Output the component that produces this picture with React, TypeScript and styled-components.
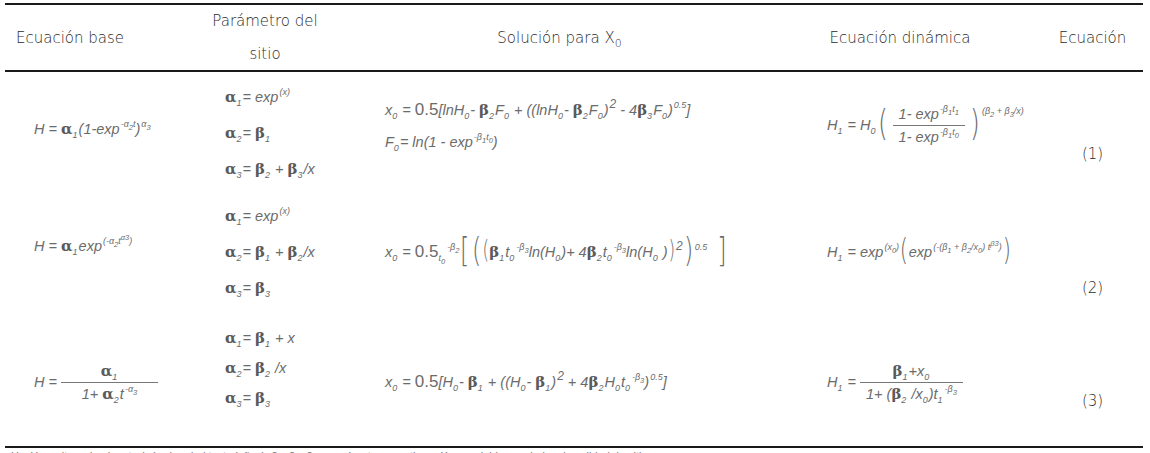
import React from 'react';
import styled, { createGlobalStyle } from 'styled-components';

const GlobalStyle = createGlobalStyle`
    html, body {
        margin: 0;
        padding: 0;
        background: #fff;
    }
    body {
        font-family: "DejaVu Sans", sans-serif;
        color: #333;
        overflow: hidden;
    }
`;

const COLS = '195px 130px 450px 240px 123px';

const Table = styled.div`
    width: 1138px;
    margin: 3px 0 0 5px;
`;

const HeadRow = styled.div`
    display: grid;
    grid-template-columns: ${COLS};
    height: 65px;
    border-top: 2px solid #1a1a1a;
    border-bottom: 2px solid #1a1a1a;
`;

const HeadCell = styled.div<{ $left?: boolean; $pad?: number }>`
    display: flex;
    align-items: center;
    justify-content: ${p => (p.$left ? 'flex-start' : 'center')};
    text-align: center;
    padding-left: ${p => p.$pad ?? 0}px;
    font-family: "DejaVu Sans", sans-serif;
    font-stretch: condensed;
    font-weight: 200;
    font-size: 15px;
    line-height: 33px;
    color: #2b2b2b;
`;

const Body = styled.div`
    border-bottom: 2px solid #1a1a1a;
`;

const Row = styled.div<{ $h: number }>`
    display: grid;
    grid-template-columns: ${COLS};
    height: ${p => p.$h}px;
`;

const Cell = styled.div<{ $pad?: number; $shift?: number }>`
    display: flex;
    flex-direction: column;
    justify-content: center;
    align-items: flex-start;
    padding-left: ${p => p.$pad ?? 0}px;
    padding-top: ${p => (p.$shift && p.$shift > 0 ? p.$shift : 0)}px;
    padding-bottom: ${p => (p.$shift && p.$shift < 0 ? -p.$shift : 0)}px;
`;

const EqCell = styled.div<{ $shift: number }>`
    display: flex;
    align-items: center;
    justify-content: center;
    padding-left: 22px;
    padding-top: ${p => p.$shift}px;
    font-family: "DejaVu Sans", sans-serif;
    font-stretch: condensed;
    font-weight: 200;
    font-size: 15px;
    color: #2b2b2b;
`;

const Formula = styled.div<{ $lh?: number }>`
    font-family: "Liberation Sans", sans-serif;
    font-style: italic;
    font-size: 14.5px;
    color: #6b6b6b;
    white-space: nowrap;
    line-height: ${p => p.$lh ?? 20}px;
`;

const Big = styled.span`
    font-style: normal;
    font-size: 17px;
`;

const G = styled.span`
    font-family: "DejaVu Serif", serif;
    font-style: normal;
    font-weight: bold;
    font-size: 15px;
    color: #5a5a5a;
`;

const Sub = styled.span<{ $size?: number }>`
    font-size: ${p => p.$size ?? 9}px;
    line-height: 0;
    vertical-align: -4px;
    margin-right: 1px;
`;

const Sup = styled.span<{ $size?: number; $high?: boolean }>`
    font-size: ${p => p.$size ?? 9}px;
    line-height: 0;
    vertical-align: ${p => (p.$high ? 16 : 7)}px;
    margin-left: 1px;
    & span {
        font-size: 9px;
    }
`;

const Frac = styled.span<{ $w?: number }>`
    display: inline-flex;
    flex-direction: column;
    align-items: center;
    vertical-align: middle;
    margin: 0 4px;
    min-width: ${p => p.$w ?? 0}px;
`;

const Num = styled.span`
    padding: 0 6px 3px;
    line-height: 16px;
`;

const Den = styled.span`
    align-self: stretch;
    text-align: center;
    border-top: 1px solid #777;
    padding: 3px 6px 0;
    line-height: 16px;
`;

const Paren = styled.span<{ $size: number }>`
    font-style: normal;
    font-weight: 200;
    font-family: "DejaVu Sans", sans-serif;
    font-size: ${p => p.$size}px;
    line-height: 1;
    display: inline-block;
    vertical-align: middle;
    transform: scaleX(0.7);
    margin: -6px -1px 0;
`;

const Params = styled.div<{ $lh?: number }>`
    display: flex;
    flex-direction: column;
    line-height: ${p => p.$lh ?? 36}px;
`;

const Note = styled.div`
    font-family: "Liberation Sans", sans-serif;
    font-size: 11px;
    color: #777;
    padding: 2px 0 0 6px;
    white-space: nowrap;
`;

const a = (n: number) => (
    <>
        <G>α</G>
        <Sub>{n}</Sub>
    </>
);

const b = (n: number) => (
    <>
        <G>β</G>
        <Sub>{n}</Sub>
    </>
);

const App: React.FC = () => {
    return (
        <>
            <GlobalStyle />
            <Table>
                <HeadRow>
                    <HeadCell $left $pad={11}>Ecuación base</HeadCell>
                    <HeadCell>
                        Parámetro del
                        <br />
                        sitio
                    </HeadCell>
                    <HeadCell $pad={10}>
                        <span>Solución para X<Sub $size={11}>0</Sub></span>
                    </HeadCell>
                    <HeadCell>Ecuación dinámica</HeadCell>
                    <HeadCell $pad={22}>Ecuación</HeadCell>
                </HeadRow>
                <Body>
                    {/* (1) */}
                    <Row $h={121}>
                        <Cell $pad={29} $shift={-8}>
                            <Formula>
                                H = {a(1)}(1-exp<Sup>-α<sub>2</sub>t</Sup>)<Sup>α<sub>3</sub></Sup>
                            </Formula>
                        </Cell>
                        <Cell $pad={25}>
                            <Params>
                                <Formula $lh={36}>{a(1)}= exp<Sup>(x)</Sup></Formula>
                                <Formula $lh={36}>{a(2)}= {b(1)}</Formula>
                                <Formula $lh={36}>{a(3)}= {b(2)} + {b(3)}/x</Formula>
                            </Params>
                        </Cell>
                        <Cell $pad={55} $shift={-14}>
                            <Formula $lh={32}>
                                x<Sub>0</Sub> = <Big>0.5</Big>[lnH<Sub>0</Sub>- {b(2)}F<Sub>0</Sub> + ((lnH<Sub>0</Sub>- {b(2)}F<Sub>0</Sub>)<Sup $size={12}>2</Sup> - 4{b(3)}F<Sub>0</Sub>)<Sup>0.5</Sup>]
                            </Formula>
                            <Formula $lh={32}>
                                F<Sub>0</Sub>= ln(1 - exp<Sup>-β<sub>1</sub>t<sub>0</sub></Sup>)
                            </Formula>
                        </Cell>
                        <Cell $pad={47} $shift={-16}>
                            <Formula $lh={48}>
                                H<Sub>1</Sub> = H<Sub>0</Sub>
                                <Paren $size={36}>(</Paren>
                                <Frac>
                                    <Num>1- exp<Sup>-β<sub>1</sub>t<sub>1</sub></Sup></Num>
                                    <Den>1- exp<Sup>-β<sub>1</sub>t<sub>0</sub></Sup></Den>
                                </Frac>
                                <Paren $size={36}>)</Paren>
                                <Sup $high>(β<sub>2</sub> + β<sub>3</sub>/x)</Sup>
                            </Formula>
                        </Cell>
                        <EqCell $shift={42}>(1)</EqCell>
                    </Row>

                    {/* (2) */}
                    <Row $h={118}>
                        <Cell $pad={29} $shift={-12}>
                            <Formula>
                                H = {a(1)}exp<Sup>(-α<sub>2</sub>t<sup>α3</sup>)</Sup>
                            </Formula>
                        </Cell>
                        <Cell $pad={25}>
                            <Params>
                                <Formula $lh={36}>{a(1)}= exp<Sup>(x)</Sup></Formula>
                                <Formula $lh={36}>{a(2)}= {b(1)} + {b(2)}/x</Formula>
                                <Formula $lh={36}>{a(3)}= {b(3)}</Formula>
                            </Params>
                        </Cell>
                        <Cell $pad={55}>
                            <Formula $lh={44}>
                                x<Sub>0</Sub> = <Big>0.5</Big><Sub>t<sub>0</sub></Sub><Sup>-β<sub>2</sub></Sup>
                                <Paren $size={34}>[</Paren>
                                <Paren $size={34}>(</Paren>
                                <Paren $size={24}>(</Paren>
                                {b(1)}t<Sub>0</Sub><Sup>-β<sub>3</sub></Sup>ln(H<Sub>0</Sub>)+ 4{b(2)}t<Sub>0</Sub><Sup>-β<sub>3</sub></Sup>ln(H<Sub>0</Sub> )
                                <Paren $size={24}>)</Paren>
                                <Sup $size={12}>2</Sup>
                                <Paren $size={34}>)</Paren>
                                <Sup>0.5</Sup>
                                <Paren $size={34}>&nbsp;]</Paren>
                            </Formula>
                        </Cell>
                        <Cell $pad={47}>
                            <Formula $lh={40}>
                                H<Sub>1</Sub> = exp<Sup>(x<sub>0</sub>)</Sup>
                                <Paren $size={30}>(</Paren>
                                exp<Sup>(-(β<sub>1</sub> + β<sub>2</sub>/x<sub>0</sub>) t<sup>β3</sup>)</Sup>
                                <Paren $size={30}>)</Paren>
                            </Formula>
                        </Cell>
                        <EqCell $shift={72}>(2)</EqCell>
                    </Row>

                    {/* (3) */}
                    <Row $h={135}>
                        <Cell $pad={29} $shift={6}>
                            <Formula $lh={44}>
                                H =
                                <Frac $w={97}>
                                    <Num>{a(1)}</Num>
                                    <Den>1+ {a(2)}t<Sup>-α<sub>3</sub></Sup></Den>
                                </Frac>
                            </Formula>
                        </Cell>
                        <Cell $pad={25} $shift={-22}>
                            <Params $lh={30}>
                                <Formula $lh={30}>{a(1)}= {b(1)} + x</Formula>
                                <Formula $lh={30}>{a(2)}= {b(2)} /x</Formula>
                                <Formula $lh={30}>{a(3)}= {b(3)}</Formula>
                            </Params>
                        </Cell>
                        <Cell $pad={55} $shift={6}>
                            <Formula>
                                x<Sub>0</Sub> = <Big>0.5</Big>[H<Sub>0</Sub>- {b(1)} + ((H<Sub>0</Sub>- {b(1)})<Sup $size={12}>2</Sup> + 4{b(2)}H<Sub>0</Sub>t<Sub>0</Sub><Sup>-β<sub>3</sub></Sup>)<Sup>0.5</Sup>]
                            </Formula>
                        </Cell>
                        <Cell $pad={47} $shift={6}>
                            <Formula $lh={44}>
                                H<Sub>1</Sub> =
                                <Frac>
                                    <Num>{b(1)}+x<Sub>0</Sub></Num>
                                    <Den>1+ ({b(2)} /x<Sub>0</Sub>)t<Sub>1</Sub><Sup>-β<sub>3</sub></Sup></Den>
                                </Frac>
                            </Formula>
                        </Cell>
                        <EqCell $shift={44}>(3)</EqCell>
                    </Row>
                </Body>
                <Note>
                    H<sub>1</sub>, H<sub>0</sub> = altura dominante (m) a la edad t<sub>1</sub>, t<sub>0</sub> (años); β<sub>1</sub>, β<sub>2</sub>, β<sub>3</sub> = parámetros a estimar; X<sub>0</sub> = variable asociada a la calidad de sitio.
                </Note>
            </Table>
        </>
    );
};

export default App;
